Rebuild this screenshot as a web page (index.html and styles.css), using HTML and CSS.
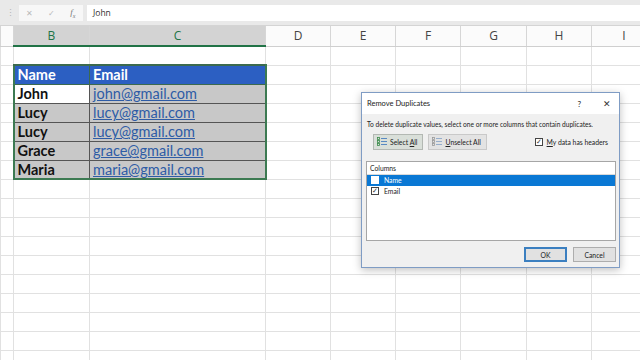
FILE: index.html
```html
<!DOCTYPE html>
<html lang="en">
<head>
    <meta charset="UTF-8">
    <meta name="viewport" content="width=device-width, initial-scale=1.0">
    <title>Remove Duplicates</title>
    <link rel="stylesheet" href="styles.css">
</head>
<body>
    <div class="toolbar">
        <span class="grip">⋮</span>
        <div class="fx-buttons">
            <span>✕</span>
            <span>✓</span>
            <span class="fx">f<sub>x</sub></span>
        </div>
        <div class="formula">John</div>
    </div>

    <table class="sheet">
        <colgroup>
            <col class="w-rh"><col class="w-b"><col class="w-c">
            <col class="w-n"><col class="w-n"><col class="w-n"><col class="w-g"><col class="w-n"><col class="w-n">
        </colgroup>
        <tr class="col-heads">
            <th></th><th class="sel">B</th><th class="sel">C</th>
            <th>D</th><th>E</th><th>F</th><th>G</th><th>H</th><th>I</th>
        </tr>
        <tr><td></td><td></td><td></td><td></td><td></td><td></td><td></td><td></td><td></td></tr>
        <tr>
            <td></td><td class="hd first">Name</td><td class="hd last">Email</td>
            <td></td><td></td><td></td><td></td><td></td><td></td>
        </tr>
        <tr>
            <td></td><td class="cell first active">John</td><td class="cell last"><a href="#">john@gmail.com</a></td>
            <td></td><td></td><td></td><td></td><td></td><td></td>
        </tr>
        <tr>
            <td></td><td class="cell first">Lucy</td><td class="cell last"><a href="#">lucy@gmail.com</a></td>
            <td></td><td></td><td></td><td></td><td></td><td></td>
        </tr>
        <tr>
            <td></td><td class="cell first">Lucy</td><td class="cell last"><a href="#">lucy@gmail.com</a></td>
            <td></td><td></td><td></td><td></td><td></td><td></td>
        </tr>
        <tr>
            <td></td><td class="cell first">Grace</td><td class="cell last"><a href="#">grace@gmail.com</a></td>
            <td></td><td></td><td></td><td></td><td></td><td></td>
        </tr>
        <tr class="bottom">
            <td></td><td class="cell first">Maria</td><td class="cell last"><a href="#">maria@gmail.com</a></td>
            <td></td><td></td><td></td><td></td><td></td><td></td>
        </tr>
        <tr><td></td><td></td><td></td><td></td><td></td><td></td><td></td><td></td><td></td></tr>
        <tr><td></td><td></td><td></td><td></td><td></td><td></td><td></td><td></td><td></td></tr>
        <tr><td></td><td></td><td></td><td></td><td></td><td></td><td></td><td></td><td></td></tr>
        <tr><td></td><td></td><td></td><td></td><td></td><td></td><td></td><td></td><td></td></tr>
        <tr><td></td><td></td><td></td><td></td><td></td><td></td><td></td><td></td><td></td></tr>
        <tr><td></td><td></td><td></td><td></td><td></td><td></td><td></td><td></td><td></td></tr>
        <tr><td></td><td></td><td></td><td></td><td></td><td></td><td></td><td></td><td></td></tr>
        <tr><td></td><td></td><td></td><td></td><td></td><td></td><td></td><td></td><td></td></tr>
        <tr><td></td><td></td><td></td><td></td><td></td><td></td><td></td><td></td><td></td></tr>
        <tr><td></td><td></td><td></td><td></td><td></td><td></td><td></td><td></td><td></td></tr>
    </table>

    <!-- Remove Duplicates dialog -->
    <div class="dialog">
        <div class="dlg-title">
            <span class="dlg-name">Remove Duplicates</span>
            <span class="dlg-help">?</span>
            <span class="dlg-close">✕</span>
        </div>
        <div class="dlg-body">
            <p class="dlg-text">To delete duplicate values, select one or more columns that contain duplicates.</p>
            <div class="dlg-actions">
                <button class="btn-tool active">
                    <svg width="10" height="9" viewBox="0 0 10 9">
                        <rect x="0.5" y="0.5" width="2" height="2" fill="none" stroke="#3a8a4a" stroke-width="0.8"/>
                        <rect x="0.5" y="3.5" width="2" height="2" fill="none" stroke="#3a8a4a" stroke-width="0.8"/>
                        <rect x="0.5" y="6.5" width="2" height="2" fill="none" stroke="#3a8a4a" stroke-width="0.8"/>
                        <path d="M4 1.5h6M4 4.5h6M4 7.5h6" stroke="#4a7fc0" stroke-width="0.9"/>
                    </svg>
                    <span>Select <u>A</u>ll</span>
                </button>
                <button class="btn-tool">
                    <svg width="10" height="9" viewBox="0 0 10 9">
                        <rect x="0.5" y="0.5" width="2" height="2" fill="none" stroke="#9a9a9a" stroke-width="0.8"/>
                        <rect x="0.5" y="3.5" width="2" height="2" fill="none" stroke="#9a9a9a" stroke-width="0.8"/>
                        <rect x="0.5" y="6.5" width="2" height="2" fill="none" stroke="#9a9a9a" stroke-width="0.8"/>
                        <path d="M4 1.5h6M4 4.5h6M4 7.5h6" stroke="#8fa8c8" stroke-width="0.9"/>
                    </svg>
                    <span><u>U</u>nselect All</span>
                </button>
                <label class="headers-check">
                    <span class="box checked">✓</span>
                    <span><u>M</u>y data has headers</span>
                </label>
            </div>
            <div class="col-list">
                <div class="col-list-head">Columns</div>
                <div class="col-item selected"><span class="box"></span>Name</div>
                <div class="col-item"><span class="box checked">✓</span>Email</div>
            </div>
            <div class="dlg-footer">
                <button class="btn default">OK</button>
                <button class="btn">Cancel</button>
            </div>
        </div>
    </div>
</body>
</html>
```

FILE: styles.css
```css
* {
    box-sizing: border-box;
}
body {
    margin: 0;
    width: 640px;
    height: 360px;
    overflow: hidden;
    background-color: #fff;
    font-family: "Open Sans", sans-serif;
    position: relative;
}

/* formula bar */
.toolbar {
    height: 26px;
    background-color: #e9e9e9;
    border-bottom: 1px solid #d4d4d4;
    display: flex;
    align-items: center;
    padding: 0 0 0 6px;
}
.grip {
    color: #b5b5b5;
    font-size: 9px;
    width: 13px;
}
.fx-buttons {
    width: 64px;
    height: 16px;
    background-color: #f7f7f7;
    display: flex;
    align-items: center;
    justify-content: space-around;
    color: #b9b9b9;
    font-size: 8px;
}
.fx-buttons .fx {
    font-family: "Liberation Serif", serif;
    font-style: italic;
    color: #777;
    font-size: 9px;
}
.fx sub {
    font-size: 6px;
}
.formula {
    flex: 1;
    height: 16px;
    margin-left: 4px;
    background-color: #fff;
    font-size: 8.5px;
    color: #333;
    line-height: 16px;
    padding-left: 6px;
}

/* worksheet grid */
.sheet {
    border-collapse: collapse;
    table-layout: fixed;
    width: 656px;
}
.w-rh { width: 13px; }
.w-b { width: 76px; }
.w-c { width: 176px; }
.w-n { width: 65px; }
.w-g { width: 66px; }

.sheet td {
    height: 19px;
    border: 1px solid #e1e1e1;
    padding: 0 0 0 3px;
    white-space: nowrap;
    overflow: hidden;
}
.col-heads th {
    height: 20px;
    font-weight: normal;
    font-size: 12px;
    color: #444;
    background-color: #fbfbfb;
    border-left: 1px solid #d6d6d6;
    border-right: 1px solid #d6d6d6;
    border-bottom: 1px solid #cfcfcf;
    padding: 0;
}
.col-heads th.sel {
    background-color: #d3d3d3;
    color: #217346;
    border-bottom: 2px solid #217346;
}

.sheet .hd {
    background-color: #2c5fc2;
    color: #fff;
    font-family: Lato, sans-serif;
    font-weight: bold;
    font-size: 14.5px;
    border: 1px solid #3c6a4e;
    border-top: 2px solid #3c6a4e;
}
.sheet .cell {
    background-color: #c8c8c8;
    color: #111;
    font-family: Lato, sans-serif;
    font-weight: bold;
    font-size: 14.5px;
    border: 1px solid #555;
}
.sheet .cell a {
    color: #2e5ca6;
    font-weight: normal;
}
.sheet .cell.active {
    background-color: #fff;
}
.sheet .first {
    border-left: 2px solid #3c7a52;
}
.sheet .last {
    border-right: 2px solid #3c7a52;
}
.sheet .bottom .cell {
    border-bottom: 2px solid #3c7a52;
}

/* dialog */
.dialog {
    position: absolute;
    left: 361px;
    top: 92px;
    width: 259px;
    height: 176px;
    border: 1px solid #7f9cc4;
    background-color: #f0f0f0;
    box-shadow: 0 2px 8px rgba(0, 0, 0, 0.25);
    font-family: Lato, sans-serif;
    color: #222;
    display: flex;
    flex-direction: column;
}
.dlg-title {
    height: 21px;
    background-color: #fff;
    display: flex;
    align-items: center;
    padding: 0 8px 0 5px;
    font-size: 7.5px;
}
.dlg-name {
    flex: 1;
}
.dlg-help {
    font-size: 8px;
    margin-right: 22px;
}
.dlg-close {
    font-size: 9px;
    color: #333;
}
.dlg-body {
    flex: 1;
    padding: 0 3px 5px 4px;
    display: flex;
    flex-direction: column;
}
.dlg-text {
    font-size: 6.6px;
    margin: 6px 0 0 1px;
}
.dlg-actions {
    display: flex;
    align-items: center;
    margin: 5px 0 0 7px;
    height: 17px;
}
.btn-tool {
    height: 16px;
    padding: 0 5px 0 3px;
    font-family: Lato, sans-serif;
    font-size: 6.8px;
    color: #222;
    background-color: #e3e3e3;
    border: 1px solid #c9c9c9;
    display: flex;
    align-items: center;
    gap: 3px;
    margin-right: 5px;
}
.btn-tool.active {
    background-color: #d9dfd9;
    border-color: #b3b8b3;
}
.headers-check {
    margin-left: auto;
    margin-right: 8px;
    display: flex;
    align-items: center;
    gap: 4px;
    font-size: 6.8px;
}
.box {
    display: inline-flex;
    align-items: center;
    justify-content: center;
    width: 8px;
    height: 8px;
    border: 1px solid #444;
    background-color: #fff;
    font-size: 7px;
    line-height: 1;
    color: #333;
}
.col-list {
    margin: 11px 0 0 0;
    height: 80px;
    background-color: #fff;
    border: 1px solid #a6a6a6;
    font-size: 6.8px;
}
.col-list-head {
    height: 13px;
    line-height: 13px;
    padding-left: 3px;
    border-bottom: 1px solid #dadada;
}
.col-item {
    height: 10.5px;
    display: flex;
    align-items: center;
    gap: 5px;
    padding-left: 4px;
}
.col-item.selected {
    background-color: #0a78d4;
    color: #fff;
}
.col-item.selected .box {
    border-color: #fff;
}
.dlg-footer {
    margin-top: auto;
    display: flex;
    justify-content: flex-end;
    gap: 6px;
}
.btn {
    width: 43px;
    height: 15px;
    font-family: Lato, sans-serif;
    font-size: 6.8px;
    color: #222;
    background-color: #e1e1e1;
    border: 1px solid #adadad;
    padding: 0;
}
.btn.default {
    border: 2px solid #3b7fc0;
}
```
